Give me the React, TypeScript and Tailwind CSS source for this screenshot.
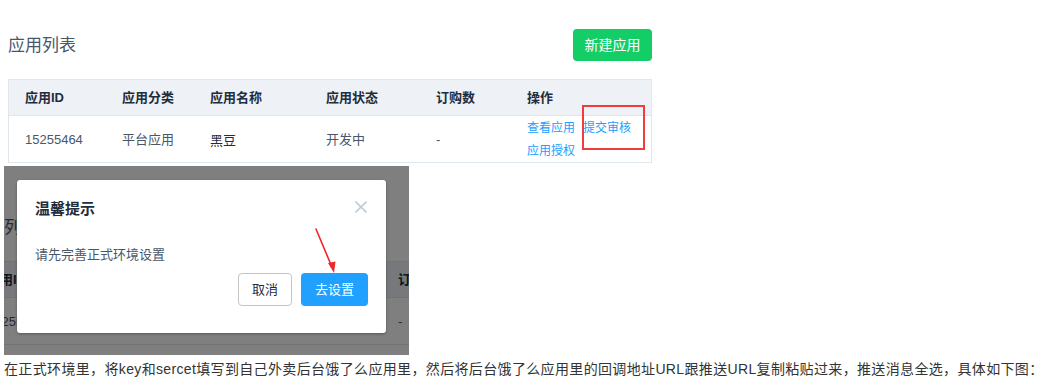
import React from "react";

const FONT = "font-['Helvetica_Neue','Liberation_Sans','Noto_Sans_CJK_SC',sans-serif]";

function TopSection() {
  return (
    <div className="w-[660px] h-[163px] pt-[29px]">
      <div className="ml-[8px] w-[644px] flex items-center justify-between">
        <div className="text-[17px] text-[#48576a] leading-none">应用列表</div>
        <div className="w-[79px] h-[32px] rounded-[4px] bg-[#13ce66] text-white text-[14px] flex items-center justify-center">
          新建应用
        </div>
      </div>
      <div className="ml-[8px] mt-[18px] w-[644px] border border-[#dfe6ec]">
        <div className="h-[36px] bg-[#eef1f6] border-b border-[#dfe6ec] grid grid-cols-[97px_88px_116px_110px_91px_1fr] pl-[16px] items-center text-[13px] font-bold text-[#1f2d3d]">
          <div>应用ID</div>
          <div>应用分类</div>
          <div>应用名称</div>
          <div>应用状态</div>
          <div>订购数</div>
          <div>操作</div>
        </div>
        <div className="h-[46px] grid grid-cols-[97px_88px_116px_110px_91px_1fr] pl-[16px] items-center text-[13px] text-[#48576a]">
          <div>15255464</div>
          <div>平台应用</div>
          <div className="pt-[3px] text-[#1f2d3d]">黑豆</div>
          <div>开发中</div>
          <div>-</div>
          <div className="flex gap-[8px] text-[12px] text-[#20a0ff] leading-[23px] self-start pt-[1px]">
            <div className="flex flex-col">
              <span>查看应用</span>
              <span>应用授权</span>
            </div>
            <span>提交审核</span>
          </div>
        </div>
      </div>
    </div>
  );
}

export default function App() {
  return (
    <div className={`w-[1062px] h-[389px] bg-white relative overflow-hidden ${FONT}`}>
      <TopSection />
      <div className="absolute left-[582px] top-[105px] w-[63px] h-[45px] border-2 border-[#f23b3b]" />

      <div className="mt-[3px] ml-[4px] w-[405px] h-[189px] relative overflow-hidden bg-white">
        <div className="-ml-[42px] mt-[16px]">
          <TopSection />
        </div>
        <div className="absolute inset-0 bg-black/50" />
        <div className="absolute left-[13px] top-[14px] w-[369px] h-[153px] bg-white rounded-[3px] shadow-[0_1px_3px_rgba(0,0,0,0.3)] px-[18px]">
          <div className="flex items-center justify-between pt-[19px]">
            <div className="text-[15px] font-bold text-[#1f2d3d] leading-[20px]">温馨提示</div>
            <svg width="12" height="12" viewBox="0 0 12 12" className="mr-[1px] -mt-[4px]">
              <path d="M0.5 0.5 L11.5 11.5 M11.5 0.5 L0.5 11.5" stroke="#bfcbd9" strokeWidth="1.6" />
            </svg>
          </div>
          <div className="mt-[27px] text-[13px] text-[#48576a] leading-[18px]">请先完善正式环境设置</div>
          <div className="mt-[9px] flex justify-end gap-[9px]">
            <div className="w-[54px] h-[33px] rounded-[4px] border border-[#c4c4c4] bg-white text-[13px] text-[#1f2d3d] flex items-center justify-center">
              取消
            </div>
            <div className="w-[67px] h-[33px] rounded-[4px] bg-[#20a0ff] text-[13px] text-white flex items-center justify-center">
              去设置
            </div>
          </div>
        </div>
        <svg className="absolute left-[302px] top-[60px]" width="40" height="52" viewBox="0 0 40 52">
          <path d="M10 3 L25.5 40" stroke="#f0262a" strokeWidth="1.6" strokeLinecap="round" />
          <path d="M22 37 L28 47 L29.5 35.5 Z" fill="#f0262a" />
        </svg>
      </div>

      <div className="ml-[4px] mt-[4px] text-[14px] leading-[20px] tracking-[0.35px] text-[#333] whitespace-nowrap">
        在正式环境里，将key和sercet填写到自己外卖后台饿了么应用里，然后将后台饿了么应用里的回调地址URL跟推送URL复制粘贴过来，推送消息全选，具体如下图：
      </div>
    </div>
  );
}
